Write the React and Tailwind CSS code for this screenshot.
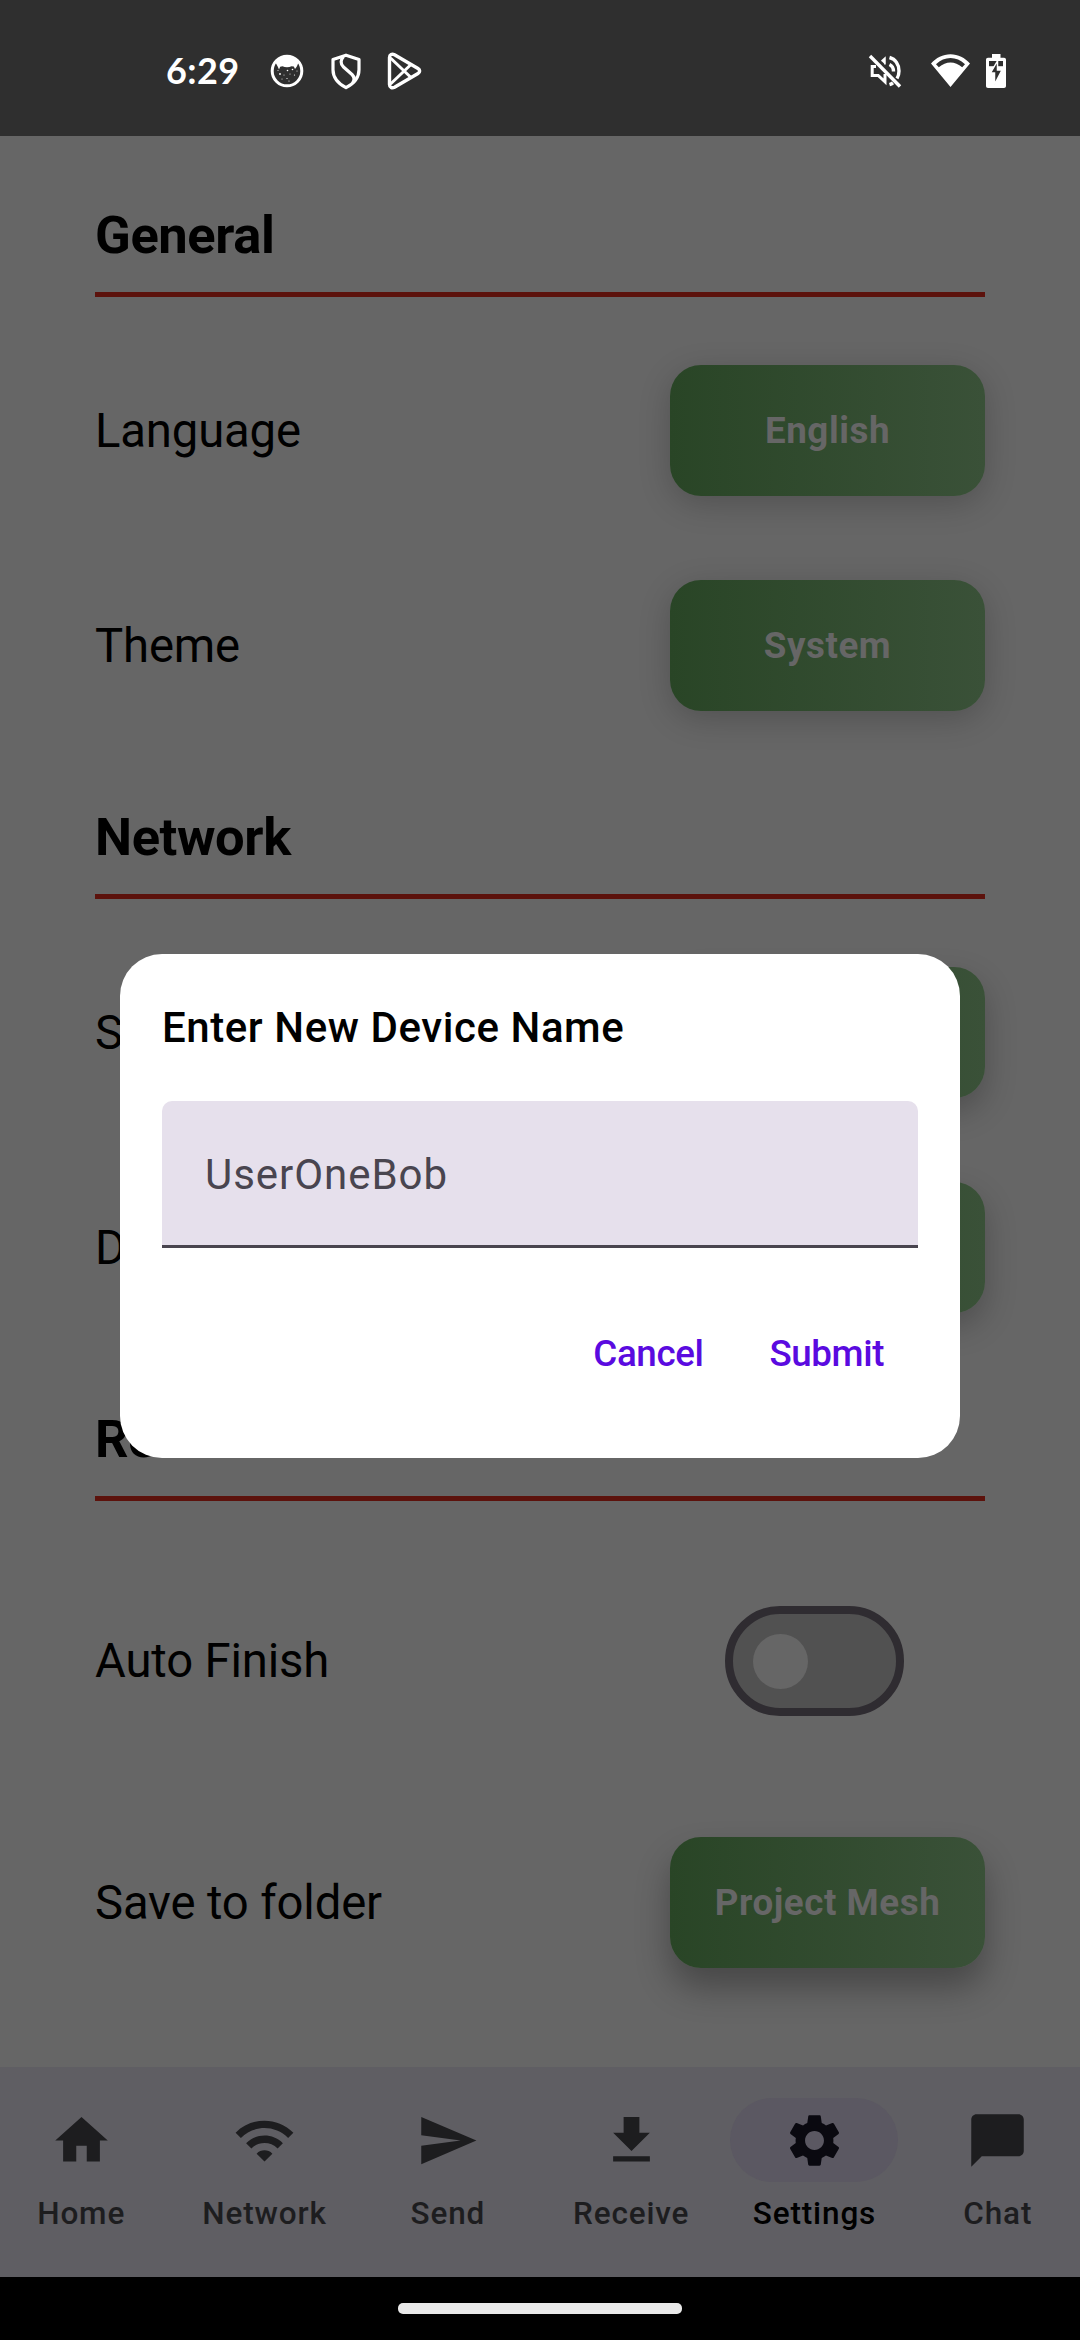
const rowLabel = "text-[47.25px] leading-[56px] tracking-[-0.15px] whitespace-nowrap text-black";

function StatusBar() {
  return (
    <header className="flex h-[136px] shrink-0 items-center justify-between bg-[#2f2f2f] pt-[5px] pr-[74px] pl-[166px] text-white">
      <div className="flex items-center">
        <span className="-mt-[2px] w-[104px] font-[Lato] text-[36px] leading-[44px] font-bold tracking-[0.4px]">6:29</span>
        <svg width="34" height="34" viewBox="0 0 34 34" fill="none">
          <circle cx="17" cy="17" r="14.8" stroke="currentColor" strokeWidth="3" />
          <path d="M5.500 8.500C8 4.500 12 2 17 2s9 2.500 11.500 6.500c-.5 1.500-1.300 2.800-1.800 4.200L25 15l-1.200-2.500-2.300-.2c-2.500 1.200-6.500 1.200-9 0l-2.300.4L9 15.500l-1.200-2.700z" fill="currentColor" />
          <g fill="currentColor">
            <circle cx="10" cy="20" r=".9" /><circle cx="17.500" cy="16.500" r=".8" /><circle cx="22.500" cy="15.500" r=".8" />
            <circle cx="14" cy="21" r=".5" /><circle cx="20" cy="20" r=".5" /><circle cx="24.500" cy="21" r=".6" />
            <circle cx="12" cy="25" r=".5" /><circle cx="17" cy="24.500" r=".6" /><circle cx="19" cy="27" r=".6" />
            <circle cx="8" cy="16.500" r=".5" /><circle cx="27" cy="17" r=".5" />
          </g>
        </svg>
        <svg className="ml-[26px]" width="32" height="38" viewBox="0 0 32 38" fill="none" stroke="currentColor" strokeWidth="3.200" strokeLinejoin="round">
          <path d="M16 3.200 29 7.500v10.200c0 8-5.500 14-13 18-7.500-4-13-10-13-18V7.500z" />
          <path d="M13.500 4.500c-3 3-3.300 7.500 0 10.500l8.500 7.500c2.800 2.800 2.500 5.500.8 8" />
        </svg>
        <svg className="ml-[24px]" width="36" height="38" viewBox="0 0 36 38" fill="none" stroke="currentColor" strokeWidth="3.400" strokeLinejoin="round">
          <path d="M3.500 5.500c0-3 2.500-4 5-2.700L32 16.500c2.200 1.400 2.200 3.700 0 5L8.500 35.200c-2.500 1.300-5 .3-5-2.700z" />
          <path d="M4.500 6 25.500 26M4.500 32 25.500 12" strokeWidth="3" />
        </svg>
      </div>
      <div className="flex items-center">
        <svg width="34" height="36" viewBox="0 0 34 36" fill="none" stroke="currentColor" strokeWidth="3.400">
          <path d="M2 3 32 33.500" />
          <path d="M8 13.500H4.200v9h6l6.800 6.300V21" strokeWidth="3" />
          <path d="M13.500 8 17 5v6.500" fill="currentColor" strokeWidth="1.500" />
          <path d="M21.500 4.500C27.500 6.200 31 11.500 31 18c0 3-.8 5.500-2 7.500M25 29.800c-1 .8-2.200 1.400-3.500 1.800" />
          <path d="M21.500 11.500c2.500 1.200 4 3.700 4 7" />
        </svg>
        <svg className="ml-[29px]" width="39" height="34" viewBox="0 0 39 34">
          <path fill="currentColor" fillRule="evenodd" d="M19.500.3C12 .3 5 4 0 9.500L19.500 33 39 9.500C34 4 27 .3 19.500.3zM5 10.200c8.500-8.300 20.500-8.300 29 0l-2.800 3.100c-7.300-6.400-16.100-6.400-23.400 0z" />
        </svg>
        <svg className="ml-[16px]" width="20" height="34" viewBox="0 0 20 34">
          <path fill="currentColor" d="M6 0h8.500v3.700H18c1.200 0 2 .8 2 2V32c0 1.200-.8 2-2 2H2c-1.200 0-2-.8-2-2V5.700c0-1.200.8-2 2-2h4z" />
          <path fill="#2f2f2f" d="M3 7h14v5.200H3z" />
          <path fill="#2f2f2f" stroke="#fff" strokeWidth="1.500" d="M12 6 4.500 19h4v11.500L16 16h-4.500V6z" />
        </svg>
      </div>
    </header>
  );
}

function SectionTitle({ children }) {
  return (
    <div className="flex flex-col border-b-[5px] border-[#5c120c] pb-[26px]">
      <h2 className="text-[52.5px] leading-[62px] font-bold tracking-[-0.4px] text-black">{children}</h2>
    </div>
  );
}

const shadows = {
  low: "shadow-[0_8px_32px_rgba(0,0,0,0.2)]",
  mid: "shadow-[0_13px_32px_rgba(0,0,0,0.24)]",
  high: "shadow-[0_20px_34px_rgba(0,0,0,0.3)]",
};

function GreenButton({ children, shadow = "low" }) {
  return (
    <button className={`flex h-[131px] w-[315px] items-center justify-center rounded-[31px] bg-linear-to-r from-[#294526] to-[#3a5138] text-[36.75px] font-bold tracking-[0.55px] text-[#666] ${shadows[shadow]}`}>
      {children}
    </button>
  );
}

function Row({ label, className = "h-[215px]", children }) {
  return (
    <div className={`flex items-center justify-between ${className}`}>
      <span className={rowLabel}>{label}</span>
      {children}
    </div>
  );
}

const tabs = [
  { label: "Home", d: "M10 20v-6h4v6h5v-8h3L12 3 2 12h3v8z" },
  { label: "Network", d: "M1 9l2 2c4.970-4.970 13.030-4.970 18 0l2-2C16.930 2.930 7.080 2.930 1 9zm8 8l3 3 3-3c-1.650-1.660-4.340-1.660-6 0zm-4-4l2 2c2.760-2.760 7.240-2.760 10 0l2-2C15.140 9.140 8.870 9.140 5 13z" },
  { label: "Send", d: "M2.010 21L23 12 2.010 3 2 10l15 2-15 2z" },
  { label: "Receive", d: "M19 9h-4V3H9v6H5l7 7 7-7zM5 18v2h14v-2H5z" },
  { label: "Settings", active: true, d: "M19.140 12.940c.04-.3.06-.61.06-.94 0-.32-.02-.64-.07-.94l2.030-1.580c.18-.14.23-.41.12-.61l-1.920-3.320c-.12-.22-.37-.29-.59-.22l-2.390.96c-.5-.38-1.030-.7-1.620-.94l-.36-2.540c-.04-.24-.24-.41-.48-.41h-3.840c-.24 0-.43.17-.47.41l-.36 2.540c-.59.24-1.130.57-1.620.94l-2.390-.96c-.22-.08-.47 0-.59.22L2.740 8.870c-.12.21-.08.47.12.61l2.030 1.580c-.05.3-.09.63-.09.94s.02.64.07.94l-2.030 1.580c-.18.14-.23.41-.12.61l1.920 3.320c.12.22.37.29.59.22l2.390-.96c.5.38 1.030.7 1.620.94l.36 2.540c.05.24.24.41.48.41h3.840c.24 0 .44-.17.47-.41l.36-2.540c.59-.24 1.130-.56 1.620-.94l2.390.96c.22.08.47 0 .59-.22l1.920-3.320c.12-.22.07-.47-.12-.61l-2.010-1.580zM12 15.600c-1.980 0-3.600-1.620-3.600-3.600s1.620-3.600 3.600-3.600 3.600 1.620 3.600 3.600-1.620 3.600-3.600 3.600z" },
  { label: "Chat", d: "M20 2H4c-1.100 0-1.990.9-1.990 2L2 22l4-4h14c1.100 0 2-.9 2-2V4c0-1.100-.9-2-2-2z" },
];

function BottomNav() {
  return (
    <nav className="flex h-[210px] shrink-0 gap-[21px] bg-[#5f5e63] pr-px">
      {tabs.map((t) => (
        <div key={t.label} className="flex min-w-0 flex-1 flex-col items-center pt-[31px]">
          <div className={`flex h-[84px] w-[168px] shrink-0 items-center justify-center rounded-full ${t.active ? "bg-[#5b5862] text-[#0a0910]" : "text-[#1d1d1f]"}`}>
            <svg width="63" height="63" viewBox="0 0 24 24" fill="currentColor">
              <path d={t.d} />
            </svg>
          </div>
          <span className={`mt-[13px] text-[31.5px] leading-[38px] font-medium tracking-[0.85px] ${t.active ? "text-black" : "text-[#1d1d1f]"}`}>{t.label}</span>
        </div>
      ))}
    </nav>
  );
}

function DeviceNameDialog() {
  return (
    <div className="absolute top-[954px] left-[120px] flex h-[504px] w-[840px] flex-col rounded-[42px] bg-white px-[42px] pt-[49px]">
      <h3 className="text-[42px] leading-[50px] font-medium tracking-[0.57px] text-black">Enter New Device Name</h3>
      <div className="mt-[48px] flex h-[147px] items-center rounded-t-[10px] border-b-[3px] border-[#49454f] bg-[#e6e0ec] pt-[3px] pl-[43px] text-[42px] tracking-[0.95px] text-[#49454f]">
        UserOneBob
      </div>
      <div className="mt-[84px] flex justify-end gap-[66px] pr-[34px] text-[36.75px] leading-[44px] font-medium tracking-[-0.4px] text-[#5a0ae0]">
        <button>Cancel</button>
        <button>Submit</button>
      </div>
    </div>
  );
}

export default function App() {
  return (
    <div className="relative flex h-[2340px] w-[1080px] flex-col overflow-hidden bg-[#666] font-[Roboto,sans-serif]">
      <StatusBar />
      <main className="flex min-h-0 flex-1 flex-col overflow-hidden px-[95px] pt-[68px]">
        <SectionTitle>General</SectionTitle>
        <div className="flex flex-col pt-[26px]">
          <Row label="Language"><GreenButton>English</GreenButton></Row>
          <Row label="Theme"><GreenButton>System</GreenButton></Row>
        </div>
        <div className="mt-[53px]"><SectionTitle>Network</SectionTitle></div>
        <div className="flex flex-col pt-[26px]">
          <Row label="S"><GreenButton shadow="mid" /></Row>
          <Row label="Device"><GreenButton shadow="mid" /></Row>
        </div>
        <div className="mt-[53px]"><SectionTitle>Receive</SectionTitle></div>
        <div className="flex flex-col pt-[42px]">
          <Row label="Auto Finish" className="h-[236px]">
            <div className="mr-[81px] flex h-[110px] w-[179px] items-center rounded-full border-8 border-[#2f2c31] bg-[#515151] pl-[20px]">
              <div className="size-[55px] rounded-full bg-[#666]" />
            </div>
          </Row>
          <Row label="Save to folder" className="h-[247px]"><GreenButton shadow="high">Project Mesh</GreenButton></Row>
        </div>
      </main>
      <BottomNav />
      <footer className="flex h-[63px] shrink-0 justify-center bg-black pt-[26px]">
        <div className="h-[11px] w-[284px] rounded-[5px] bg-[#eaeaea]" />
      </footer>
      <DeviceNameDialog />
    </div>
  );
}
